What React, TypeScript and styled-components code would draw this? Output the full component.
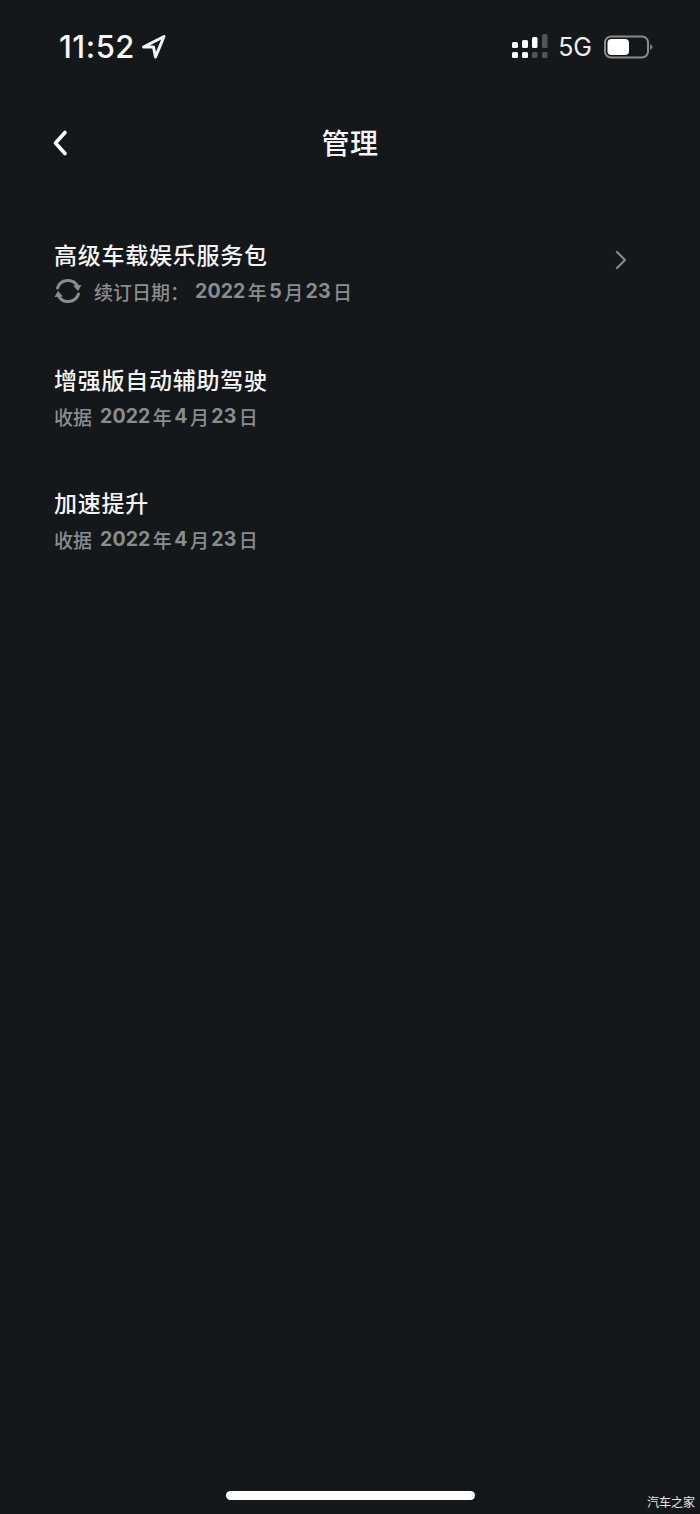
import React from "react";
import styled, { createGlobalStyle } from "styled-components";

const Global = createGlobalStyle`
  html, body { margin: 0; padding: 0; background: #15181b; }
  * { box-sizing: border-box; }
`;

const CJK = `Inter, "Noto Sans CJK SC", sans-serif`;

const Screen = styled.div`
  position: relative;
  width: 700px;
  height: 1514px;
  background: #15181b;
  color: #fff;
  font-family: ${CJK};
  overflow: hidden;
`;

const StatusBar = styled.div`
  height: 92px;
  padding: 27px 47px 0 59px;
  display: flex;
  justify-content: space-between;
  align-items: flex-start;
`;

const TimeGroup = styled.div`
  display: flex;
  align-items: center;
  gap: 6px;
  height: 38px;
`;

const Time = styled.span`
  font-size: 31px;
  font-weight: 500;
  letter-spacing: 0.5px;
  color: #f6f6f6;
`;

const StatusIcons = styled.div`
  display: flex;
  align-items: center;
  gap: 10px;
  height: 40px;
`;

const Network = styled.span`
  font-size: 25px;
  font-weight: 400;
  margin-right: 2px;
  color: #eee;
`;

const NavBar = styled.div`
  height: 100px;
  position: relative;
  display: flex;
  align-items: center;
  justify-content: center;
  padding-top: 4px;
`;

const BackSlot = styled.div`
  position: absolute;
  left: 52px;
  top: 38px;
  line-height: 0;
`;

const Title = styled.h1`
  margin: 0;
  font-size: 28px;
  line-height: 40px;
  font-weight: 500;
  letter-spacing: 0.5px;
  color: #f5f5f5;
`;

const List = styled.div`
  padding: 48px 54px 0;
  display: flex;
  flex-direction: column;
`;

const Row = styled.div<{ $height: number }>`
  height: ${(p) => p.$height}px;
  display: flex;
  justify-content: space-between;
  align-items: flex-start;
`;

const RowName = styled.div`
  font-size: 23px;
  line-height: 32px;
  font-weight: 500;
  letter-spacing: 0.75px;
  color: #f4f4f4;
`;

const RowMeta = styled.div`
  display: flex;
  align-items: center;
  height: 32px;
  margin-top: 3px;
  font-size: 19px;
  font-weight: 500;
  color: #8a8c8e;
  white-space: pre;
`;

const Label = styled.span<{ $gap: number }>`
  margin-right: ${(p) => p.$gap}px;
`;

const Num = styled.span`
  font-weight: 700;
  font-size: 19.5px;
  letter-spacing: 0.1px;
  margin: 0 2.4px;
`;

const RenewIcon = styled.svg`
  margin-right: 12px;
  flex: none;
`;

const Chevron = styled.svg`
  margin: 10px 19px 0 0;
`;

const HomeBar = styled.div`
  position: absolute;
  left: 226px;
  top: 1491px;
  width: 249px;
  height: 9px;
  border-radius: 5px;
  background: #fff;
`;

const Watermark = styled.div`
  position: absolute;
  left: 647px;
  top: 1496px;
  font-size: 12px;
  line-height: 14px;
  color: #e8e8e8;
  white-space: nowrap;
`;

const Bars = () => (
  <svg width="36" height="26" viewBox="0 0 36 26">
    <g fill="#fff">
      <rect x="0" y="8" width="6" height="6" rx="1.5" />
      <rect x="10" y="6" width="6" height="8" rx="1.5" />
      <rect x="20" y="3" width="5.5" height="11" rx="1.5" />
      <rect x="0" y="18" width="6" height="6" rx="1.5" />
      <rect x="10" y="18" width="6" height="6" rx="1.5" />
    </g>
    <g fill="#525457">
      <rect x="30" y="0" width="5.5" height="14" rx="1.5" />
      <rect x="20" y="18" width="5.5" height="6" rx="1.5" />
      <rect x="30" y="18" width="5.5" height="6" rx="1.5" />
    </g>
  </svg>
);

const Battery = () => (
  <svg width="49" height="24" viewBox="0 0 49 24">
    <rect x="1" y="1.5" width="43" height="21" rx="6" fill="none" stroke="#8a8b8d" strokeWidth="2" />
    <rect x="3.5" y="4" width="21.5" height="16" rx="4" fill="#fff" />
    <path d="M46 9 L48.5 11 V13 L46 15 Z" fill="#77797b" />
  </svg>
);

const Dated = ({ label, gap, y, m, d }: { label: string; gap: number; y: string; m: string; d: string }) => (
  <>
    <Label $gap={gap}>{label}</Label>
    <Num>{y}</Num>年<Num>{m}</Num>月<Num>{d}</Num>日
  </>
);

export default function App() {
  return (
    <Screen>
      <Global />
      <StatusBar>
        <TimeGroup>
          <Time>11:52</Time>
          <svg width="25" height="25" viewBox="0 0 25 25">
            <path d="M23 2.5 L2.5 13 L12.5 13 L14.5 23 Z" fill="none" stroke="#f6f6f6" strokeWidth="3" strokeLinejoin="round" />
          </svg>
        </TimeGroup>
        <StatusIcons>
          <Bars />
          <Network>5G</Network>
          <Battery />
        </StatusIcons>
      </StatusBar>
      <NavBar>
        <BackSlot>
          <svg width="16" height="26" viewBox="0 0 16 26">
            <path d="M13 2.5 L3.5 13 L13 23.5" fill="none" stroke="#fff" strokeWidth="3.6" strokeLinecap="round" strokeLinejoin="round" />
          </svg>
        </BackSlot>
        <Title>管理</Title>
      </NavBar>
      <List>
        <Row $height={125}>
          <div>
            <RowName>高级车载娱乐服务包</RowName>
            <RowMeta>
              <RenewIcon width="28" height="28" viewBox="0 0 28 28">
                <g fill="none" stroke="#8a8c8e" strokeWidth="3" strokeLinecap="round">
                  <path d="M3.5 11 A11 11 0 0 1 23.5 9" />
                  <path d="M24.5 17 A11 11 0 0 1 4.5 19" />
                </g>
                <path d="M27.5 8 L19 8.5 L24 14 Z" fill="#8a8c8e" />
                <path d="M0.5 20 L9 19.5 L4 14 Z" fill="#8a8c8e" />
              </RenewIcon>
              <Dated label="续订日期：" gap={3.6} y="2022" m="5" d="23" />
            </RowMeta>
          </div>
          <Chevron width="12" height="20" viewBox="0 0 12 20">
            <path d="M2 2 L10 10 L2 18" fill="none" stroke="#85878a" strokeWidth="2.2" strokeLinecap="round" strokeLinejoin="round" />
          </Chevron>
        </Row>
        <Row $height={123}>
          <div>
            <RowName>增强版自动辅助驾驶</RowName>
            <RowMeta>
              <Dated label="收据" gap={5.6} y="2022" m="4" d="23" />
            </RowMeta>
          </div>
        </Row>
        <Row $height={122}>
          <div>
            <RowName>加速提升</RowName>
            <RowMeta>
              <Dated label="收据" gap={5.6} y="2022" m="4" d="23" />
            </RowMeta>
          </div>
        </Row>
      </List>
      <HomeBar />
      <Watermark>汽车之家</Watermark>
    </Screen>
  );
}
